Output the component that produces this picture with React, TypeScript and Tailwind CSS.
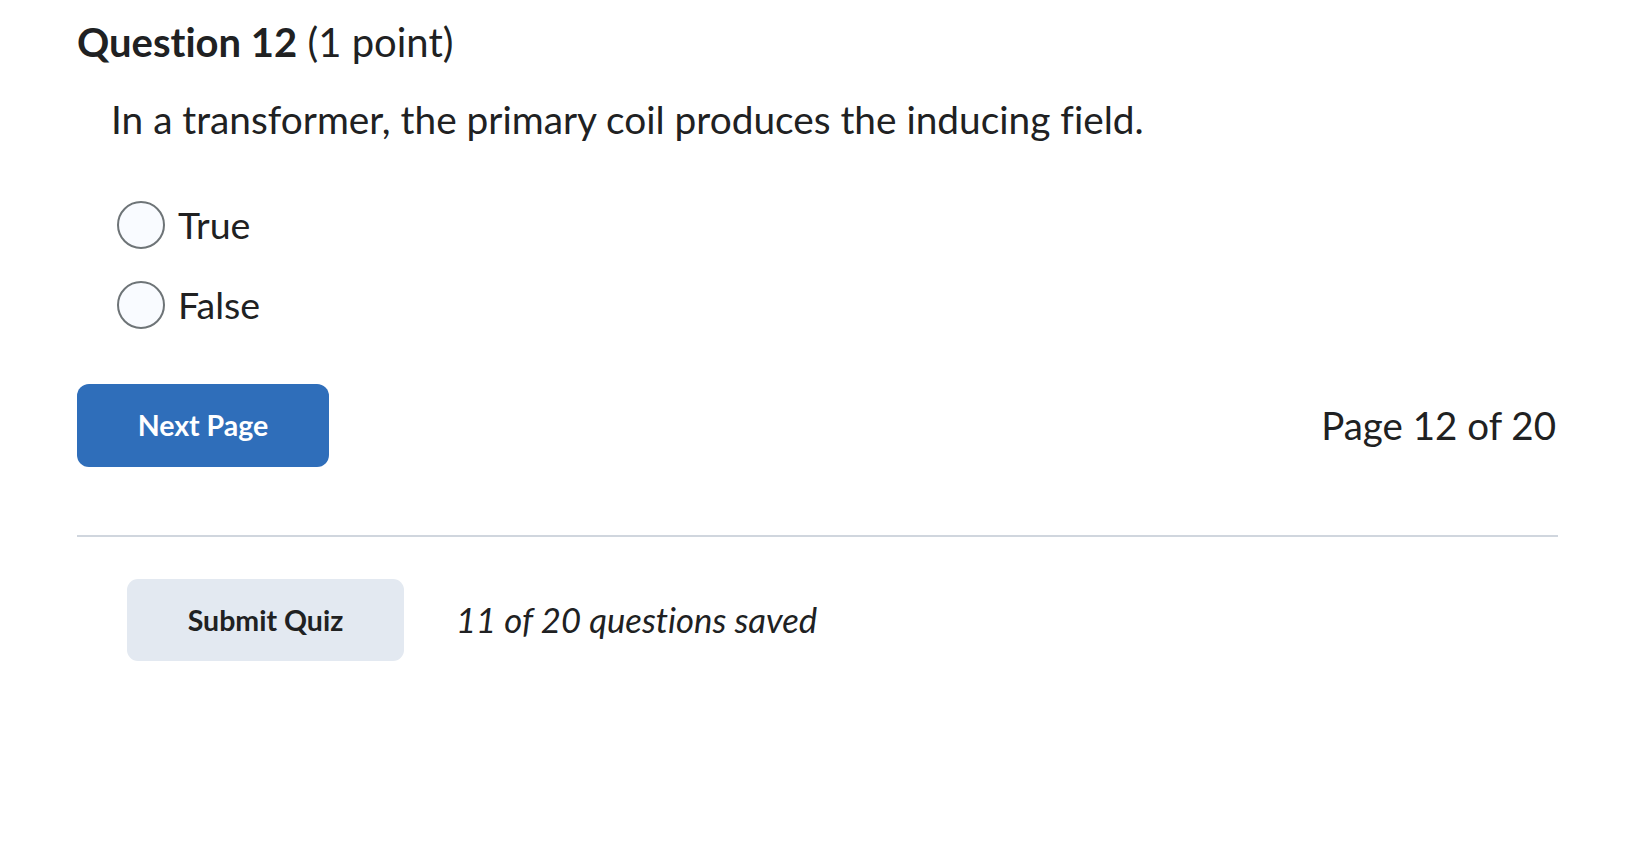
export default function App() {
  const font = { fontFamily: 'Lato, "Noto Sans", sans-serif' };
  return (
    <div
      className="w-[1650px] h-[852px] bg-white text-[#202122] [font-variant-ligatures:none]"
      style={font}
    >
      <div className="w-[1481px] ml-[77px] pt-[18px]">
        <h1 className="text-[40px] leading-[48px]">
          <span className="font-bold">Question 12</span> <span>(1 point)</span>
        </h1>
        <p className="ml-[34px] mt-[29px] text-[38.8px] leading-[48px]">
          In a transformer, the primary coil produces the inducing field.
        </p>
        <div className="ml-[40px] mt-[58px] flex flex-col gap-[32px]">
          {["True", "False"].map((t) => (
            <label key={t} className="flex items-center gap-[13px] h-[48px]">
              <span className="w-[48px] h-[48px] rounded-full border-2 border-[#6e7477] bg-[#f9fbff]" />
              <span className="text-[37.5px] leading-[48px]">{t}</span>
            </label>
          ))}
        </div>
        <div className="mt-[55px] flex items-center justify-between">
          <button className="w-[252px] h-[83px] rounded-[12px] bg-[#2f6eba] text-white font-bold text-[28.5px]">
            Next Page
          </button>
          <span className="text-[38.5px] mr-[2px]">Page 12 of 20</span>
        </div>
        <div className="mt-[68px] border-t-2 border-[#d0d6de]" />
        <div className="mt-[42px] ml-[50px] flex items-center gap-[52px]">
          <button className="w-[277px] h-[82px] rounded-[11px] bg-[#e3e9f1] text-[#202122] font-bold text-[28.5px]">
            Submit Quiz
          </button>
          <span className="italic text-[34.7px]">11 of 20 questions saved</span>
        </div>
      </div>
    </div>
  );
}
